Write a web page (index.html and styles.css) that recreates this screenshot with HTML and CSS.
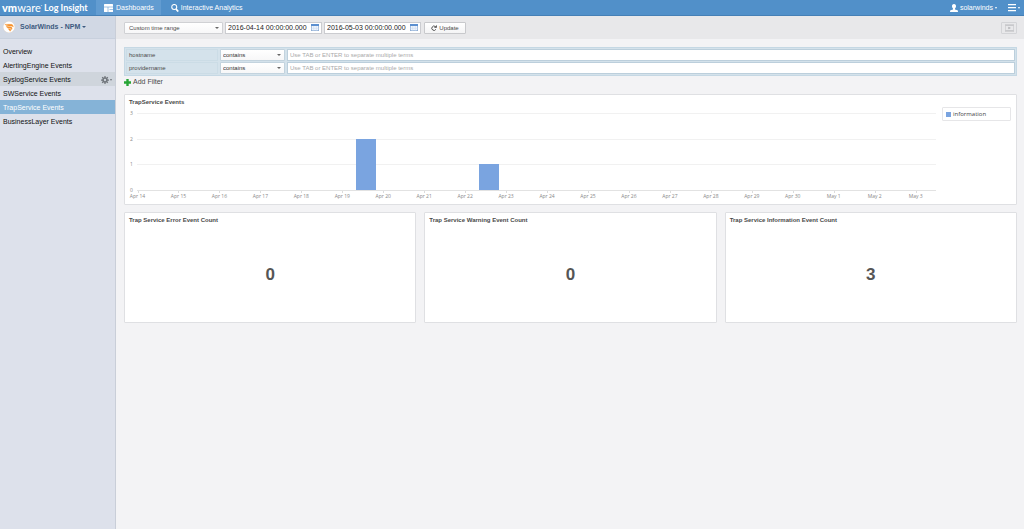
FILE: index.html
```html
<!DOCTYPE html>
<html lang="en">
<head>
<meta charset="utf-8">
<title>Log Insight - Dashboards</title>
<link rel="stylesheet" href="styles.css">
</head>
<body>
<header class="topbar">
  <div class="brand"><span class="brand-name"><b>vm</b>ware<sup>·</sup></span><span class="brand-product">Log Insight</span></div>
  <nav class="tabs">
    <a class="tab tab-active" href="#"><svg class="icon-dash" viewBox="0 0 18 16"><rect width="18" height="16" rx="1" fill="#fff"/><path d="M0 6h18M8 6v10M11 11h7" stroke="#629cd1" stroke-width="1.200"/></svg>Dashboards</a>
    <a class="tab" href="#"><svg class="icon-search" viewBox="0 0 16 16" fill="none" stroke="#fff"><circle cx="6.500" cy="6" r="5" stroke-width="2.200"/><path d="M10 10l4.500 5" stroke-width="3.500"/></svg>Interactive Analytics</a>
  </nav>
  <div class="account">
    <button class="top-button"><svg class="icon-user" viewBox="0 0 16 16" fill="#fff"><path d="M8 0c3 0 4 2 4 4.500 0 2-1 3.500-2 4.500v2l5 1.500q1 .5 1 3.500H0q0-3 1-3.500L6 11V9C5 8 4 6.500 4 4.500 4 2 5 0 8 0z"/></svg>solarwinds<i class="caret"></i></button>
    <button class="top-button" aria-label="Menu"><svg class="icon-menu" viewBox="0 0 8 8" fill="#fff"><path d="M0 0h8v1.300H0zM0 3h8v1.300H0zM0 6h8v1.300H0z"/></svg><i class="caret"></i></button>
  </div>
</header>
<div class="layout">
  <aside class="sidebar">
    <button class="pack"><svg class="icon-pack" viewBox="0 0 36 36"><circle cx="18" cy="18" r="17.500" fill="#fff" stroke="#e3cdb8"/><path d="M6 10c6 1 13-1 19 0 4 1 6 4 6 8-4-4-9-3-13-3C12 15 8 14 6 10zM10 16c5 2 10 0 15 2 3 2 3 5 1 8-1-4-4-4-8-4-4 0-7-2-8-6zM16 23c3 1 6 0 7 2 1 2 0 5-2 6 0-3-4-4-5-8z" fill="#f7922d" stroke="#f7922d"/></svg><span>SolarWinds - NPM</span><i class="caret"></i></button>
    <nav class="menu">
      <a class="item" href="#">Overview</a>
      <a class="item" href="#">AlertingEngine Events</a>
      <a class="item item-hover" href="#"><span>SyslogService Events</span><span class="tools"><svg class="icon-gear" viewBox="0 0 16 16"><path d="M8 0v16M0 8h16M2.300 2.300l11.400 11.400M13.700 2.300L2.300 13.700" stroke="#71767c" stroke-width="2.500"/><circle cx="8" cy="8" r="5.500" fill="#71767c"/><circle cx="8" cy="8" r="2.300" fill="#cfd5dc"/></svg><i class="caret"></i></span></a>
      <a class="item" href="#">SWService Events</a>
      <a class="item item-active" href="#">TrapService Events</a>
      <a class="item" href="#">BusinessLayer Events</a>
    </nav>
  </aside>
  <main class="main">
    <div class="toolbar">
      <span class="select range"><select aria-label="Time range"><option>Custom time range</option></select></span>
      <span class="date"><input type="text" aria-label="From" value="2016-04-14 00:00:00.000"><button aria-label="Pick start date"><svg class="icon-cal" viewBox="0 0 24 21"><rect x="1" y="1" width="22" height="19" fill="#eef4fb" stroke="#7fa3cf" stroke-width="2"/><path d="M0 0h24v6H0z" fill="#5b8fd0"/><path d="M8 6v14M16 6v14M1 13h22" stroke="#c6d8ee" stroke-width="1.500"/></svg></button></span>
      <span class="date"><input type="text" aria-label="To" value="2016-05-03 00:00:00.000"><button aria-label="Pick end date"><svg class="icon-cal" viewBox="0 0 24 21"><rect x="1" y="1" width="22" height="19" fill="#eef4fb" stroke="#7fa3cf" stroke-width="2"/><path d="M0 0h24v6H0z" fill="#5b8fd0"/><path d="M8 6v14M16 6v14M1 13h22" stroke="#c6d8ee" stroke-width="1.500"/></svg></button></span>
      <button class="update"><svg class="icon-refresh" viewBox="0 0 16 16"><path d="M13 11.500A5.800 5.800 0 1 1 11.500 4" fill="none" stroke="#444" stroke-width="2.400"/><path d="M15.500 0v7.500H8z" fill="#444"/></svg>Update</button>
      <button class="present" aria-label="Presentation mode"><svg class="icon-film" viewBox="0 0 27 24"><path d="M1 1h25v22H1z" fill="none" stroke="#c2c3c6" stroke-width="2"/><path d="M1 4h25M1 20h25" stroke="#c2c3c6" stroke-width="3"/><path d="M10 8l8 4-8 4z" fill="#b0b1b4"/></svg></button>
    </div>
    <div class="content">
      <section class="filters">
        <div class="filter"><label class="field" for="f1">hostname</label><span class="select operator"><select aria-label="hostname operator"><option>contains</option></select></span><input class="term" id="f1" type="text" placeholder="Use TAB or ENTER to separate multiple terms"></div>
        <div class="filter"><label class="field" for="f2">providername</label><span class="select operator"><select aria-label="providername operator"><option>contains</option></select></span><input class="term" id="f2" type="text" placeholder="Use TAB or ENTER to separate multiple terms"></div>
      </section>
      <button class="add"><svg class="icon-plus" viewBox="0 0 7 7"><path d="M2.300 0h2.400v2.300H7v2.400H4.700V7H2.300V4.700H0V2.300h2.300z" fill="#27a536"/></svg>Add Filter</button>
      <section class="card chart-card">
        <h2>TrapService Events</h2>
        <div class="chart">
          <div class="y-axis"><span>3</span><span>2</span><span>1</span><span>0</span></div>
          <div class="chart-body">
            <div class="plot">
              <div class="band"></div><div class="band"></div><div class="band"></div>
              <div class="bar" style="left:27.4%;height:66.6%"></div>
              <div class="bar" style="left:42.8%;height:33.3%"></div>
            </div>
            <div class="x-axis"><span>Apr 14</span><span>Apr 15</span><span>Apr 16</span><span>Apr 17</span><span>Apr 18</span><span>Apr 19</span><span>Apr 20</span><span>Apr 21</span><span>Apr 22</span><span>Apr 23</span><span>Apr 24</span><span>Apr 25</span><span>Apr 26</span><span>Apr 27</span><span>Apr 28</span><span>Apr 29</span><span>Apr 30</span><span>May 1</span><span>May 2</span><span>May 3</span></div>
          </div>
          <div class="legend"><i class="swatch"></i>information</div>
        </div>
      </section>
      <div class="counts">
        <section class="card"><h2>Trap Service Error Event Count</h2><p class="count">0</p></section>
        <section class="card"><h2>Trap Service Warning Event Count</h2><p class="count">0</p></section>
        <section class="card"><h2>Trap Service Information Event Count</h2><p class="count">3</p></section>
      </div>
    </div>
  </main>
</div>
</body>
</html>
```
FILE: styles.css
```css
* { box-sizing: border-box; }
body {
  margin: 0;
  min-height: 100vh;
  display: flex;
  flex-direction: column;
  font: 6px/8px "Liberation Sans", Arial, sans-serif;
  color: #4a4a4a;
  background: #f3f3f5;
}
button, input, select { font: inherit; color: inherit; margin: 0; padding: 0; border: 0; background: none; }
button { cursor: pointer; display: flex; align-items: center; }
a { color: inherit; text-decoration: none; }
svg { display: block; flex: none; }
.caret { flex: none; border: 2px solid transparent; border-top-color: currentColor; border-bottom: 0; }

.topbar {
  display: flex;
  height: 16px;
  font-size: 7px;
  color: #fff;
  background: #5190c9;
  border-bottom: 1px solid #4580b6;
}
.brand { display: flex; align-items: center; gap: 2px; width: 96px; padding-left: 2px; white-space: nowrap; }
.brand-name { font: 11px/12px Lato, sans-serif; }
.brand-name b { font-weight: 900; }
.brand-name sup { font-size: 5px; line-height: 1px; }
.brand-product { font: 9px/12px Lato, sans-serif; font-weight: 700; }
.tabs { display: flex; }
.tab { display: flex; align-items: center; gap: 2px; padding: 0 10px; }
.tab-active { gap: 3px; background: #629cd1; padding: 0 7px 0 8px; }
.icon-dash { width: 9px; height: 8px; }
.icon-search { width: 8px; height: 8px; }
.account { display: flex; gap: 11px; margin-left: auto; padding-right: 4px; }
.top-button { gap: 2px; }
.top-button .caret { border-width: 2px 1px 0; }
.icon-user { width: 8px; height: 8px; }
.icon-menu { width: 8px; height: 8px; }

.layout { display: flex; flex: 1; }
.sidebar { width: 116px; flex: none; background: #dde1eb; border-right: 1px solid #c9ced8; font-size: 7px; color: #111; }
.pack { width: 100%; height: 23px; padding-left: 3px; gap: 2px; font-weight: 700; color: #3c5a80; background: #d1d8e4; border-bottom: 1px solid #c8d0dd; }
.pack span { padding-left: 3px; }
.icon-pack { width: 12px; height: 12px; }
.menu { padding-top: 5px; }
.item { display: flex; align-items: center; justify-content: space-between; height: 14px; padding: 1px 3px 0; }
.item-hover { background: #cfd5dc; }
.item-active { color: #fff; background: #85b3d7; }
.tools { display: flex; align-items: center; gap: 1px; color: #71767c; }
.tools .caret { border-width: 2px 1px 0; }
.icon-gear { width: 8px; height: 8px; }

.main { flex: 1; min-width: 0; }
.toolbar { display: flex; align-items: center; gap: 2px; height: 23px; padding: 0 7px 0 8px; background: #e8e8ea; }
.select { position: relative; display: flex; height: 12px; background: linear-gradient(#fff, #f7f7f8); border: 1px solid #d0d1d4; border-radius: 1px; }
.select::after { content: ""; position: absolute; right: 3px; top: 4px; border: 2px solid transparent; border-top-color: #666; border-bottom: 0; pointer-events: none; }
.select select { width: 100%; appearance: none; outline: 0; }
.range { width: 99px; padding-left: 4px; }
.date { display: flex; align-items: center; width: 97px; height: 12px; padding: 0 2px; background: #fff; border: 1px solid #cbccd0; font-size: 7px; color: #222; }
.date input { flex: 1; min-width: 0; outline: 0; }
.icon-cal { width: 8px; height: 7px; }
.update, .present { justify-content: center; height: 12px; border: 1px solid #c8c9cc; border-radius: 1px; background: linear-gradient(#fff, #f4f4f5); }
.update { width: 42px; gap: 2px; margin-left: 1px; }
.icon-refresh { width: 6px; height: 6px; }
.present { width: 16px; margin-left: auto; background: #e8e8ea; border-color: #d3d4d7; }
.icon-film { width: 9px; height: 8px; }

.content { padding: 8px 7px 8px 8px; }
.filters { display: grid; gap: 1px; padding: 1px; background: #d4e2eb; border: 1px solid #c5d8e4; }
.filter { display: flex; gap: 2px; height: 12px; }
.field { width: 92px; padding: 1px 2px; border: 1px solid #cbdce6; }
.operator { width: 65px; padding-left: 2px; color: #333; border-color: #c3d3de; }
.term { flex: 1; min-width: 0; padding: 0 2px; background: #fff; border: 1px solid #bccfdc; }
.term::placeholder { color: #aaa; opacity: 1; }
.add { gap: 2px; height: 12px; font-size: 7px; }
.icon-plus { width: 7px; height: 7px; }

.card { background: #fff; border: 1px solid #dfe0e3; border-radius: 1px; padding: 3px 4px; }
.card h2 { margin: 0; font-size: 6px; line-height: 8px; color: #4a4a4a; }
.chart-card { margin-top: 6px; }
.chart { display: flex; height: 95px; padding-top: 7px; font: 5px/6px "Open Sans", sans-serif; color: #888; }
.y-axis { display: flex; flex-direction: column; justify-content: space-between; width: 8px; height: 83px; margin-top: -3px; padding-left: 1px; }
.chart-body { flex: 1; min-width: 0; }
.plot { position: relative; display: flex; flex-direction: column; height: 78px; border-bottom: 1px solid #e2e2e2; }
.band { flex: 1; border-top: 1px solid #f1f1f1; }
.bar { position: absolute; bottom: 0; width: 20px; background: #7aa4e0; }
.x-axis { display: flex; width: 102.5%; margin-left: -2.5%; }
.x-axis span { position: relative; flex: 1; padding-top: 2px; text-align: center; white-space: nowrap; }
.x-axis span::before { content: ""; position: absolute; top: 0; left: 50%; width: 1px; height: 2px; background: #dcdcdc; }
.legend { display: flex; align-items: center; gap: 2px; width: 69px; height: 14px; margin: -6px 1px 0 6px; padding: 0 3px; border: 1px solid #e6e6e8; border-radius: 1px; background: #fff; font: 6px/8px "Open Sans", sans-serif; color: #444; }
.swatch { width: 5px; height: 5px; background: #7aa4e0; }
.counts { display: grid; grid-template-columns: repeat(3, 1fr); gap: 8px; margin-top: 7px; }
.count { margin: 0; padding: 42px 0 36px; text-align: center; font-size: 17px; line-height: 17px; font-weight: 700; color: #555; }
```
